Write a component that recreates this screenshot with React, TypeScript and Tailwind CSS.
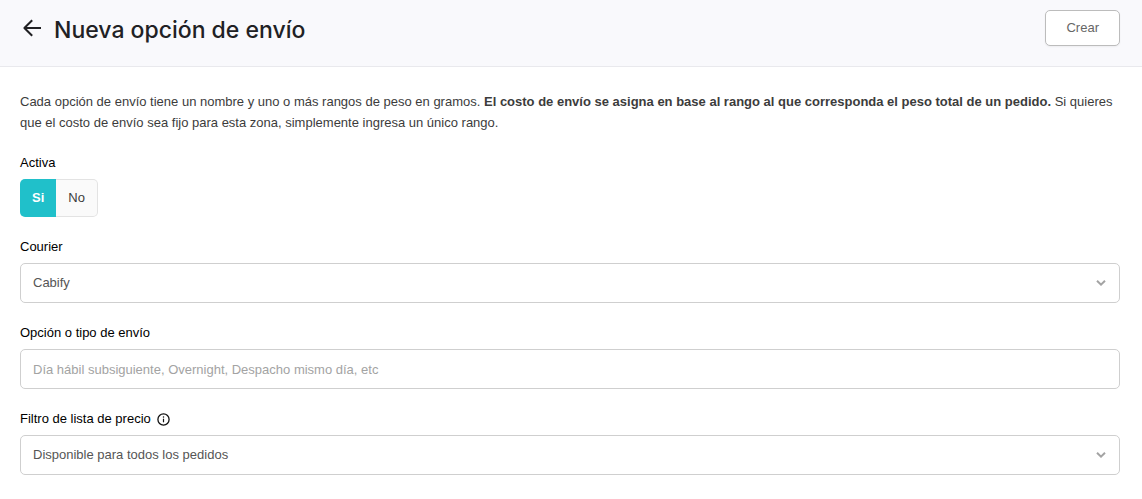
import React, { useState } from "react";
import clsx from "clsx";

type FieldProps = {
  id: string;
  label: string;
  info?: boolean;
  children: React.ReactNode;
};

const controlClass =
  "block h-10 w-full rounded-[5px] border border-[#cfcfcf] bg-white px-3 text-[13px] leading-5";

function BackIcon() {
  return (
    <svg width="20" height="20" viewBox="0 0 20 20" fill="none" aria-hidden="true">
      <path
        d="M19 10H2.5M10.2 2.2L2.4 10l7.8 7.8"
        stroke="#212124"
        strokeWidth="2"
        strokeLinejoin="round"
      />
    </svg>
  );
}

function InfoIcon() {
  return (
    <svg width="13" height="13" viewBox="0 0 13 13" fill="none" aria-hidden="true">
      <circle cx="6.5" cy="6.5" r="5.6" stroke="#111" strokeWidth="1.3" />
      <path d="M6.5 5.7v3.6" stroke="#111" strokeWidth="1.2" />
      <circle cx="6.5" cy="4" r="0.75" fill="#111" />
    </svg>
  );
}

function Field({ id, label, info, children }: FieldProps) {
  return (
    <div className="flex flex-col gap-1.5">
      <div className="flex items-center gap-1.5 text-[13px] leading-5 text-black">
        <label htmlFor={id}>{label}</label>
        {info && <InfoIcon />}
      </div>
      {children}
    </div>
  );
}

function Select({ id, options }: { id: string; options: string[] }) {
  return (
    <div className="relative">
      <select id={id} className={clsx(controlClass, "appearance-none pr-9 text-[#555]")}>
        {options.map((option) => (
          <option key={option}>{option}</option>
        ))}
      </select>
      <svg
        className="pointer-events-none absolute inset-y-0 right-3.5 my-auto"
        width="10"
        height="6"
        viewBox="0 0 10 6"
        fill="none"
        aria-hidden="true"
      >
        <path d="M1 0.8l4 3.8 4-3.8" stroke="#a3a3a3" strokeWidth="2" />
      </svg>
    </div>
  );
}

export default function App() {
  const [active, setActive] = useState(true);

  return (
    <div className="bg-white font-['Liberation_Sans',Arial,sans-serif] text-[13px] text-[#3c3c3c]">
      <header className="flex items-center justify-between border-b border-[#e9e9ed] bg-[#f9f9fc] py-2.5 pr-[22px] pb-5 pl-5">
        <div className="flex items-center gap-3">
          <a href="#" aria-label="Volver" className="pl-0.5">
            <BackIcon />
          </a>
          <h1 className="pt-1 font-['Inter',sans-serif] text-[23px] leading-8 font-medium text-[#212124]">
            Nueva opción de envío
          </h1>
        </div>
        <button
          type="button"
          className="h-9 rounded-[5px] border border-[#bcbcbc] bg-white px-5 text-[#666] shadow-xs"
        >
          Crear
        </button>
      </header>

      <form className="flex flex-col gap-5 py-6 pr-[22px] pl-5">
        <p className="leading-[21px]">
          Cada opción de envío tiene un nombre y uno o más rangos de peso en gramos.{" "}
          <strong className="font-bold">
            El costo de envío se asigna en base al rango al que corresponda el peso total de un
            pedido.
          </strong>{" "}
          Si quieres que el costo de envío sea fijo para esta zona, simplemente ingresa un único
          rango.
        </p>

        <fieldset>
          <legend className="mb-1.5 leading-5 text-black">Activa</legend>
          <div className="flex h-[38px] w-fit">
            <button
              type="button"
              aria-pressed={active}
              onClick={() => setActive(true)}
              className={clsx(
                "rounded-l-[5px] px-3",
                active
                  ? "bg-[#20c0ca] font-bold text-white"
                  : "border border-r-0 border-[#e3e3e3] bg-[#fafafa]"
              )}
            >
              Si
            </button>
            <button
              type="button"
              aria-pressed={!active}
              onClick={() => setActive(false)}
              className={clsx(
                "rounded-r-[5px] px-3",
                !active
                  ? "bg-[#20c0ca] font-bold text-white"
                  : "border border-l-0 border-[#e3e3e3] bg-[#fafafa]"
              )}
            >
              No
            </button>
          </div>
        </fieldset>

        <Field id="courier" label="Courier">
          <Select id="courier" options={["Cabify"]} />
        </Field>

        <Field id="option" label="Opción o tipo de envío">
          <input
            id="option"
            type="text"
            placeholder="Día hábil subsiguiente, Overnight, Despacho mismo día, etc"
            className={clsx(controlClass, "placeholder:text-[#a3a3a3]")}
          />
        </Field>

        <Field id="price-list" label="Filtro de lista de precio" info>
          <Select id="price-list" options={["Disponible para todos los pedidos"]} />
        </Field>
      </form>
    </div>
  );
}
